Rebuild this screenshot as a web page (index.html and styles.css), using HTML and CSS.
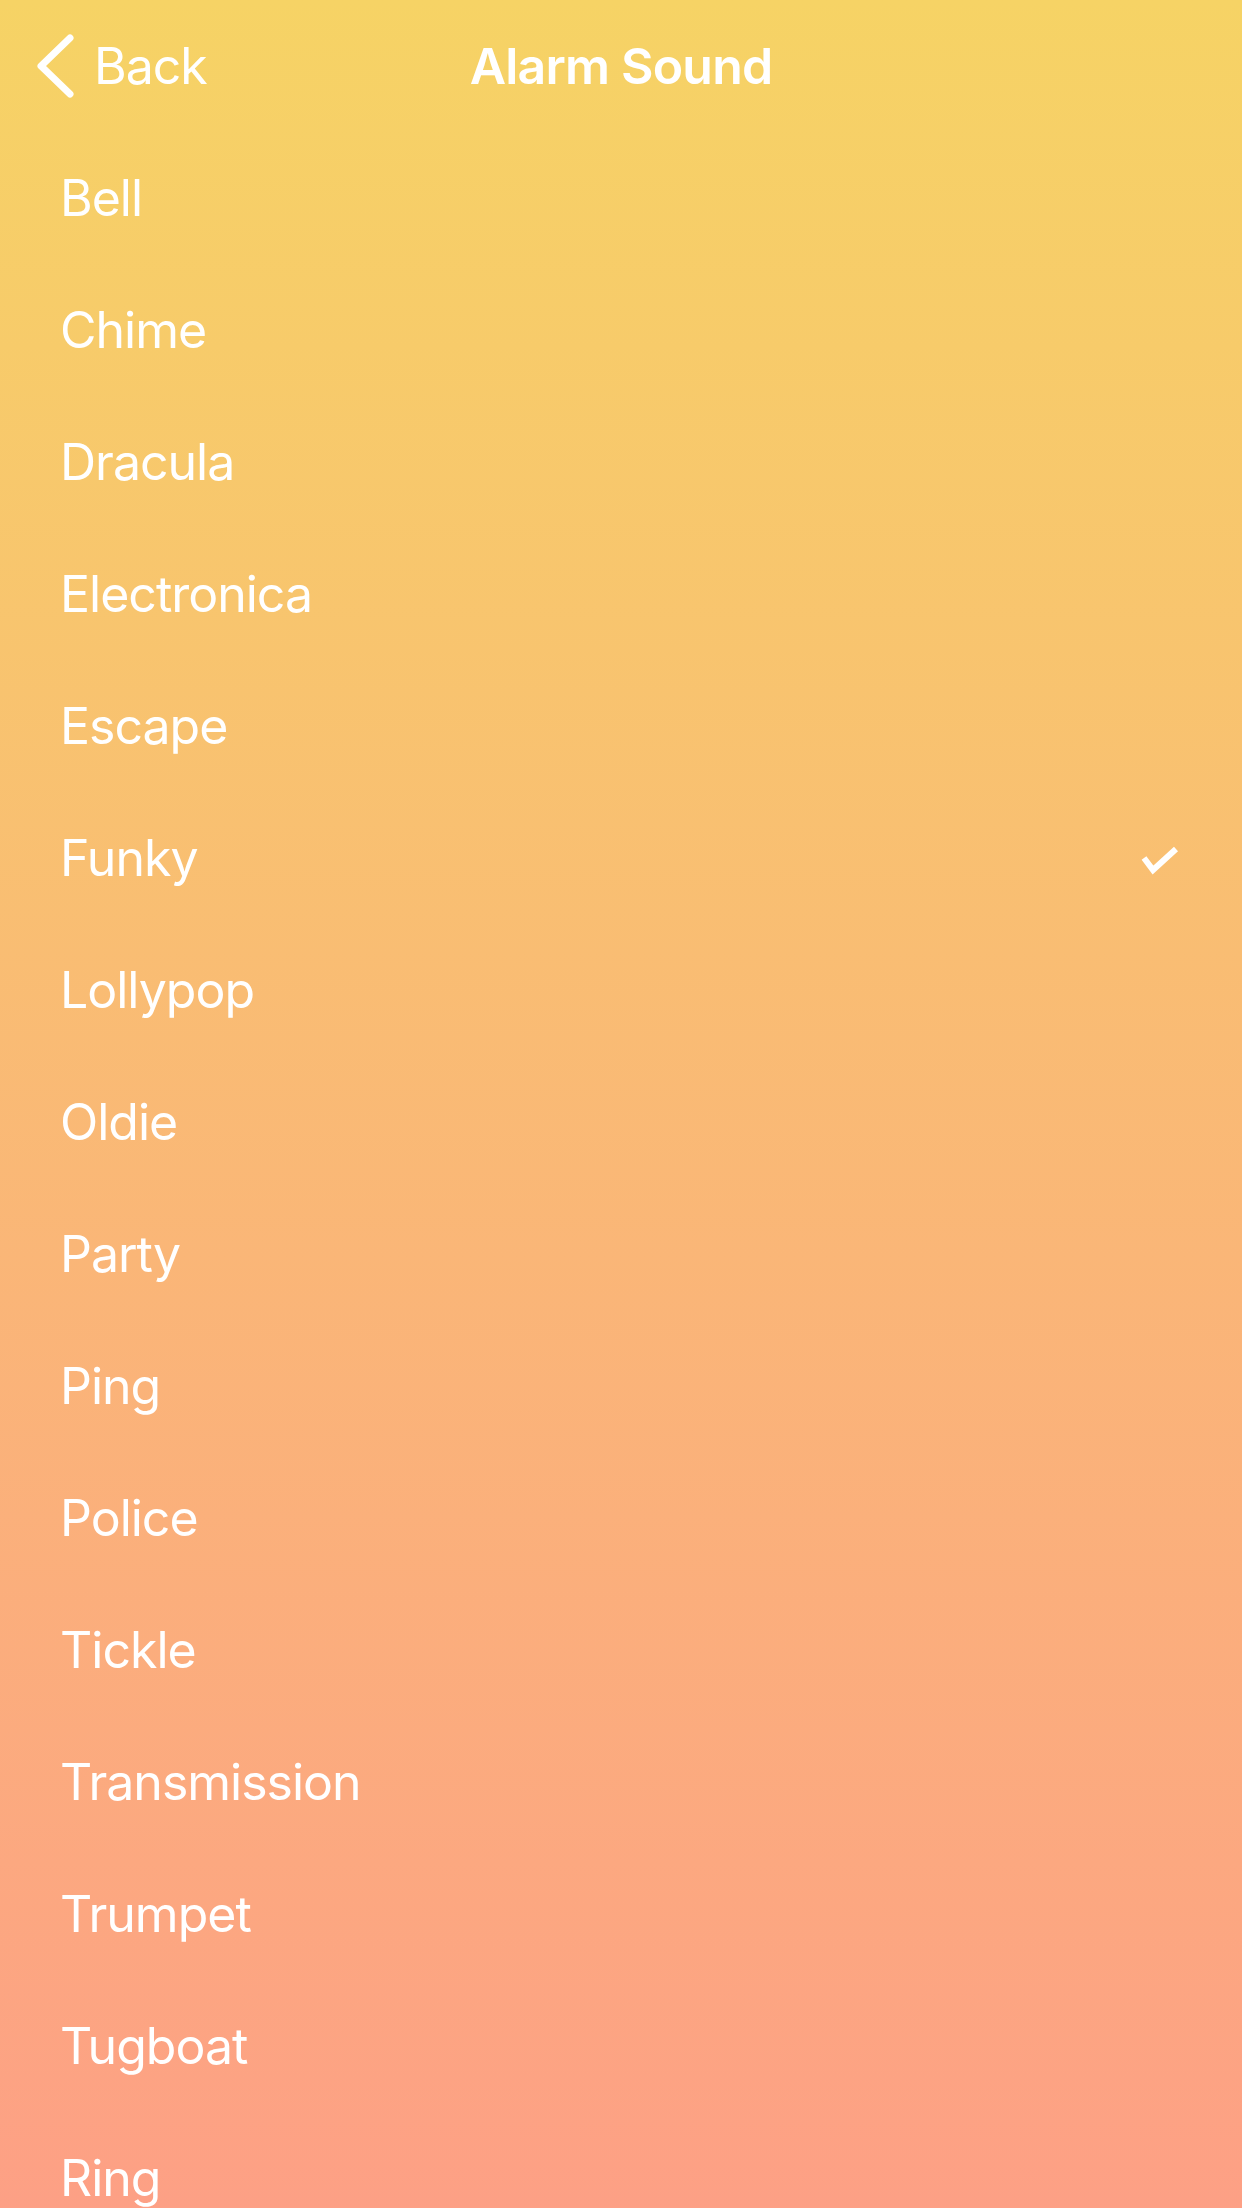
FILE: index.html
```html
<!DOCTYPE html>
<html lang="en">
<head>
<meta charset="utf-8">
<title>Alarm Sound</title>
<link rel="stylesheet" href="styles.css">
</head>
<body>
<div class="screen">
  <header class="navbar">
    <div class="nav-left">
      <a class="back" href="#">
        <svg class="chevron" width="42" height="68" viewBox="0 0 42 68" aria-hidden="true">
          <path d="M36 6 L7 34 L36 62" fill="none" stroke="#fff" stroke-width="7" stroke-linecap="round" stroke-linejoin="round"/>
        </svg>
        <span class="back-label">Back</span>
      </a>
    </div>
    <h1 class="title">Alarm Sound</h1>
    <div class="nav-right"></div>
  </header>
  <ul class="list">
    <li class="row"><span>Bell</span></li>
    <li class="row"><span>Chime</span></li>
    <li class="row"><span>Dracula</span></li>
    <li class="row"><span>Electronica</span></li>
    <li class="row"><span>Escape</span></li>
    <li class="row selected"><span>Funky</span>
      <svg class="check" width="40" height="32" viewBox="0 0 40 32" aria-hidden="true">
        <path d="M4 13 L13 25 L36 4" fill="none" stroke="#fff" stroke-width="6" stroke-linecap="butt" stroke-linejoin="miter"/>
      </svg>
    </li>
    <li class="row"><span>Lollypop</span></li>
    <li class="row"><span>Oldie</span></li>
    <li class="row"><span>Party</span></li>
    <li class="row"><span>Ping</span></li>
    <li class="row"><span>Police</span></li>
    <li class="row"><span>Tickle</span></li>
    <li class="row"><span>Transmission</span></li>
    <li class="row"><span>Trumpet</span></li>
    <li class="row"><span>Tugboat</span></li>
    <li class="row"><span>Ring</span></li>
  </ul>
</div>
</body>
</html>
```

FILE: styles.css
```css
html, body {
  margin: 0;
  padding: 0;
}

body {
  width: 1242px;
  height: 2208px;
  overflow: hidden;
  font-family: "Inter", "Noto Sans", "Liberation Sans", sans-serif;
  color: #fff;
  background: linear-gradient(to bottom, #f6d365 0%, #fda085 100%);
}

.screen {
  width: 1242px;
  height: 2208px;
  overflow: hidden;
}

.navbar {
  height: 132px;
  display: grid;
  grid-template-columns: 1fr auto 1fr;
  align-items: center;
}

.nav-left {
  display: flex;
  align-items: center;
  padding-left: 34px;
}

.back {
  display: flex;
  align-items: center;
  gap: 18px;
  color: #fff;
  text-decoration: none;
}

.chevron {
  display: block;
}

.back-label {
  font-size: 50px;
  font-weight: 400;
  letter-spacing: -1px;
}

.title {
  margin: 0;
  font-size: 50px;
  font-weight: 600;
  letter-spacing: -0.8px;
  text-align: center;
}

.list {
  list-style: none;
  margin: 0;
  padding: 0;
}

.row {
  height: 132px;
  display: flex;
  align-items: center;
  justify-content: space-between;
  padding: 0 62px 0 60px;
  font-size: 50px;
  font-weight: 400;
  letter-spacing: -1px;
}

.check {
  display: block;
  margin-top: 6px;
}
```
